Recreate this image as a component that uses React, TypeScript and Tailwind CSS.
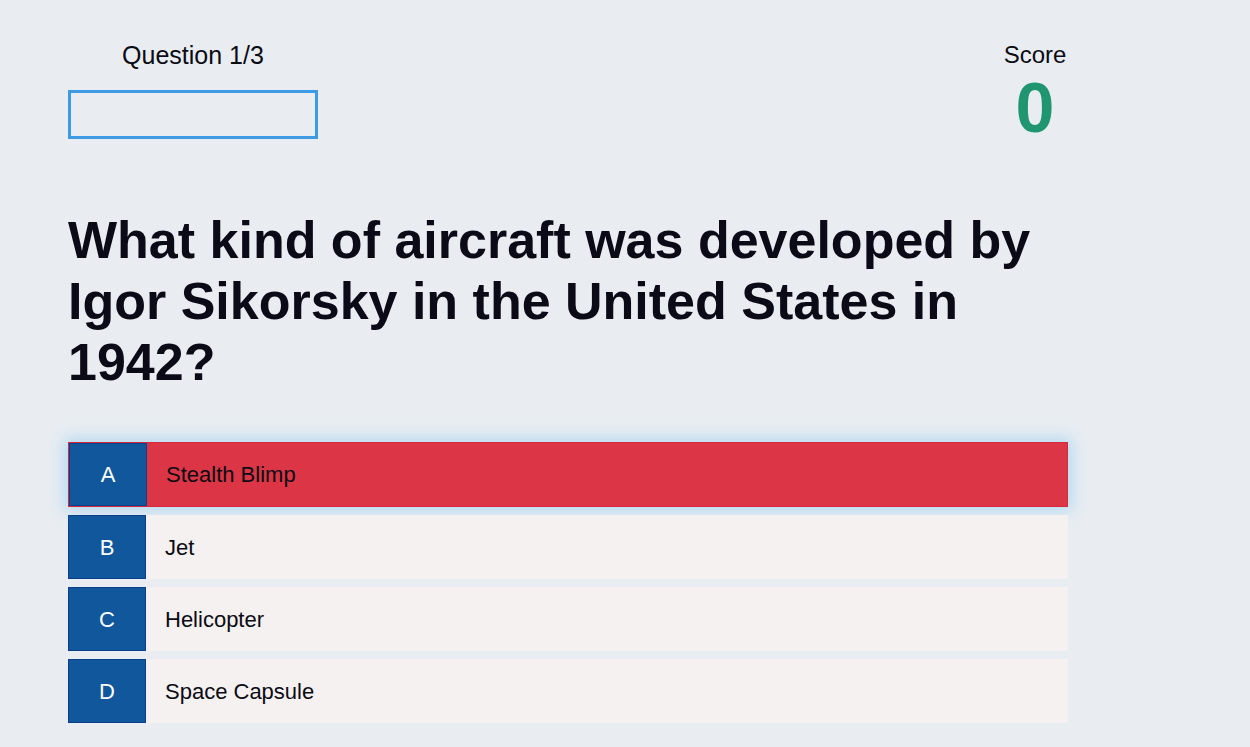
const options = [
  { letter: "A", text: "Stealth Blimp", wrong: true },
  { letter: "B", text: "Jet" },
  { letter: "C", text: "Helicopter" },
  { letter: "D", text: "Space Capsule" },
];

export default function App() {
  return (
    <div
      className="min-h-screen bg-[#e9edf2] text-[#0b0b14]"
      style={{ fontFamily: '"Liberation Sans", Arial, sans-serif' }}
    >
      <div className="w-[1000px] ml-[68px] pt-[41px]">
        <div className="flex justify-between items-start">
          <div className="w-[250px] flex flex-col items-center">
            <div className="text-[25px] leading-[28px]">Question 1/3</div>
            <div className="mt-[21px] w-[250px] h-[49px] border-[3px] border-[#3d9be3]" />
          </div>
          <div className="flex flex-col items-center w-[70px] mr-[-2px]">
            <div className="text-[24px] leading-[28px]">Score</div>
            <div className="text-[70px] leading-[70px] font-bold text-[#1f9670] mt-[4px]">0</div>
          </div>
        </div>

        <h1 className="mt-[67px] text-[52px] leading-[61px] font-bold text-[#0b0b18]">
          What kind of aircraft was developed by Igor Sikorsky in the United States in 1942?
        </h1>

        <div className="mt-[49px] flex flex-col gap-[8px]">
          {options.map((o) => (
            <div
              key={o.letter}
              className={
                o.wrong
                  ? "flex h-[65px] bg-[#dc3545] border border-[#d42a3d] shadow-[0_0_14px_4px_rgba(160,210,240,0.7)]"
                  : "flex h-[64px] bg-[#f5f1f0]"
              }
            >
              <div className="w-[78px] bg-[#11579c] border border-[#0c3f8c] flex items-center justify-center text-white text-[22px]">
                {o.letter}
              </div>
              <div className="flex items-center pl-[19px] text-[22px]">{o.text}</div>
            </div>
          ))}
        </div>
      </div>
    </div>
  );
}
